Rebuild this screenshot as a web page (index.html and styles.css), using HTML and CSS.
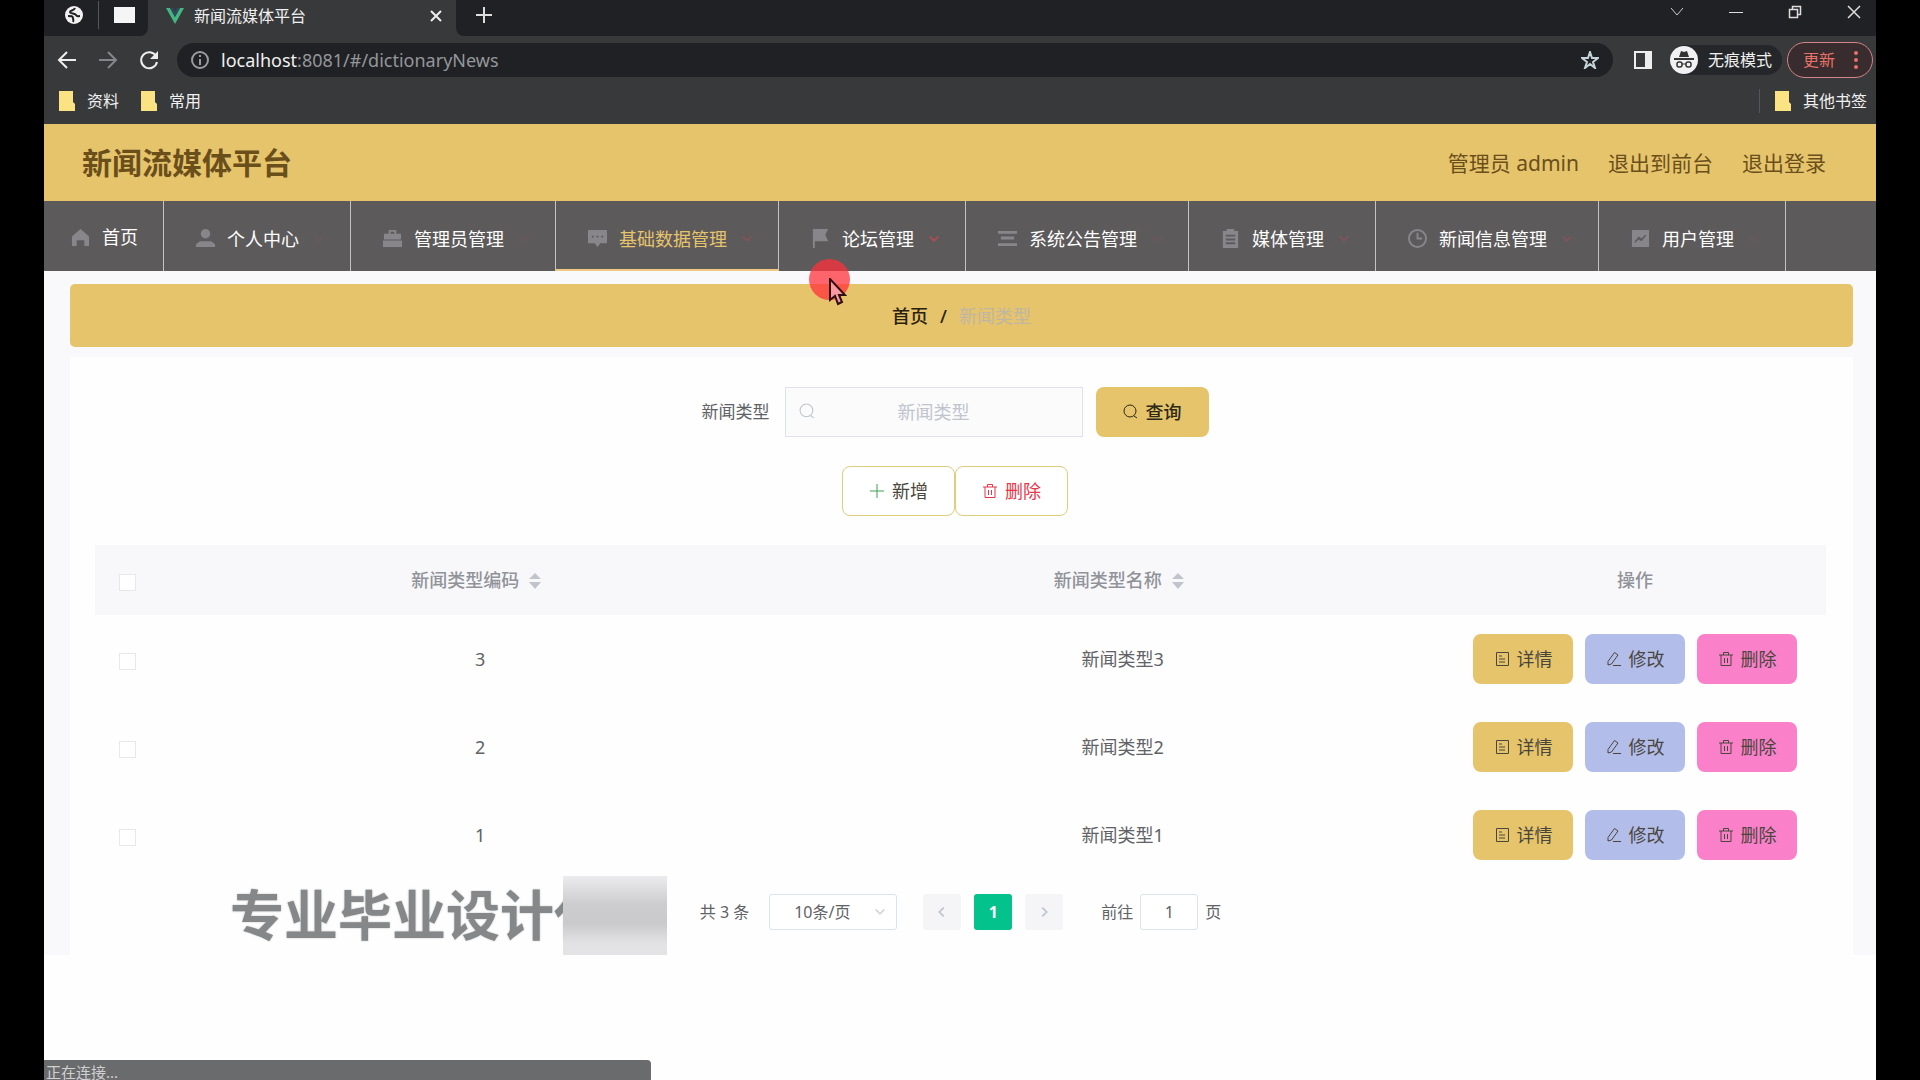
FILE: index.html
```html
<!DOCTYPE html>
<html lang="zh-CN">
<head>
    <meta charset="UTF-8">
    <meta name="viewport" content="width=device-width, initial-scale=1.0">
    <title>新闻流媒体平台</title>
    <link rel="stylesheet" href="styles.css">
</head>
<body>
    <svg class="sprite" aria-hidden="true">
        <symbol id="i-search" viewBox="0 0 16 16"><circle cx="7" cy="7" r="6" fill="none" stroke="currentColor"/><path d="M11 12l3 2" fill="none" stroke="currentColor"/></symbol>
        <symbol id="i-delete" viewBox="0 0 16 16"><path d="M1 4h14M5.500 4V1.500h5V4M3 4v10.500h10V4M6.500 7v5M9.500 7v5" fill="none" stroke="currentColor"/></symbol>
        <symbol id="i-detail" viewBox="0 0 16 16"><path d="M2.500 1.500h12v13h-12zM5 5h3M5 8h6M5 11h6" fill="none" stroke="currentColor"/></symbol>
        <symbol id="i-edit" viewBox="0 0 16 16"><path d="M2 10.500L8.500 1.500l3.500 2.500-6.500 9L2 14zM7 14.500h8" fill="none" stroke="currentColor"/></symbol>
        <symbol id="i-down" viewBox="0 0 16 16"><path d="M3 5l5 5 5-5" fill="none" stroke="currentColor" stroke-width="2"/></symbol>
        <symbol id="i-folder" viewBox="0 0 16 20"><path d="M0 0h14v11l2 2v7H0z" fill="#fbe283"/></symbol>
    </svg>

    <div class="window">
        <!-- 浏览器 -->
        <div class="browser">
            <div class="tab-strip">
                <div class="pinned">
                    <svg width="18" height="18" viewBox="0 0 18 18"><circle cx="9" cy="9" r="9" fill="#f1f1f1"/><path d="M10 2c-1 3-5 2-5 4s5 1 6 3 2 1 4 1M3 10c3 0 5 0 5 2s1 2 0 4" fill="none" stroke="#202124" stroke-width="2"/></svg>
                    <span class="split"></span>
                    <span class="blank-tab"></span>
                </div>
                <div class="tab">
                    <svg width="18" height="16" viewBox="0 0 18 16"><path d="M0 0h4l5 9 5-9h4L9 16z" fill="#41b883"/><path d="M4 0h3l2 4 2-4h3L9 9z" fill="#35495e"/></svg>
                    <span class="tab-title">新闻流媒体平台</span>
                    <button class="plain" aria-label="关闭标签页"><svg width="12" height="12" viewBox="0 0 12 12"><path d="M1 1l10 10M11 1L1 11" stroke="#eee" stroke-width="2"/></svg></button>
                </div>
                <div class="strip-rest">
                    <button class="plain" aria-label="新标签页"><svg width="16" height="16" viewBox="0 0 16 16"><path d="M8 0v16M0 8h16" stroke="#ddd" stroke-width="2"/></svg></button>
                    <div class="win-buttons">
                        <button class="plain" aria-label="搜索标签页"><svg width="14" height="14" viewBox="0 0 14 14"><path d="M1 3l6 7 6-7" fill="none" stroke="#ccc"/></svg></button>
                        <button class="plain" aria-label="最小化"><svg width="14" height="14" viewBox="0 0 14 14"><path d="M0 7.500h14" stroke="#ddd"/></svg></button>
                        <button class="plain" aria-label="还原"><svg width="14" height="14" viewBox="0 0 14 14"><path d="M1.500 4.500h8v8h-8zM4.500 4V1.500h8v8H10" fill="none" stroke="#ddd" stroke-width="1.500"/></svg></button>
                        <button class="plain" aria-label="关闭"><svg width="14" height="14" viewBox="0 0 14 14"><path d="M1 1l12 12M13 1L1 13" stroke="#ddd" stroke-width="1.500"/></svg></button>
                    </div>
                </div>
            </div>

            <div class="toolbar">
                <button class="plain" aria-label="后退"><svg width="20" height="20" viewBox="0 0 20 20"><path d="M19 10H2M10 2l-8 8 8 8" fill="none" stroke="#eee" stroke-width="2"/></svg></button>
                <button class="plain" aria-label="前进"><svg width="20" height="20" viewBox="0 0 20 20"><path d="M1 10h17M10 2l8 8-8 8" fill="none" stroke="#85868a" stroke-width="2"/></svg></button>
                <button class="plain" aria-label="重新加载"><svg width="20" height="20" viewBox="0 0 20 20"><path d="M17 6a8 8 0 1 0 1 6" fill="none" stroke="#eee" stroke-width="2"/><path d="M19 1v8h-8z" fill="#eee"/></svg></button>
                <div class="omnibox">
                    <svg width="18" height="18" viewBox="0 0 18 18"><circle cx="9" cy="9" r="8" fill="none" stroke="#9a9b9e" stroke-width="2"/><path d="M9 4v2M9 8v6" stroke="#9a9b9e" stroke-width="2"/></svg>
                    <span class="url"><b>localhost</b>:8081/#/dictionaryNews</span>
                    <svg width="18" height="18" viewBox="0 0 18 18"><path d="M9 1l2 6h6l-5 4 2 6-5-4-5 4 2-6-5-4h6z" fill="none" stroke="#c5d4da" stroke-width="2"/></svg>
                </div>
                <svg width="18" height="18" viewBox="0 0 18 18"><path d="M1 1h16v16H1z" fill="none" stroke="#eee" stroke-width="2"/><path d="M11 1h6v16h-6z" fill="#eee"/></svg>
                <div class="incognito">
                    <svg width="28" height="28" viewBox="0 0 28 28"><circle cx="14" cy="14" r="14" fill="#f1f1f4"/><path d="M9 11l2-6 3 1 3-1 2 6z" fill="#333"/><path d="M4 13h20" stroke="#333" stroke-width="2"/><rect x="7" y="16" width="5" height="5" rx="2" fill="none" stroke="#333" stroke-width="1.500"/><rect x="16" y="16" width="5" height="5" rx="2" fill="none" stroke="#333" stroke-width="1.500"/><path d="M12 18h4" stroke="#333"/></svg>
                    <span>无痕模式</span>
                </div>
                <button class="update">更新<svg width="4" height="18" viewBox="0 0 4 18"><circle cx="2" cy="2" r="2"/><circle cx="2" cy="9" r="2"/><circle cx="2" cy="16" r="2"/></svg></button>
            </div>

            <div class="bookmarks">
                <a href="#"><svg width="16" height="20"><use href="#i-folder"/></svg>资料</a>
                <a href="#"><svg width="16" height="20"><use href="#i-folder"/></svg>常用</a>
                <a class="other" href="#"><svg width="16" height="20"><use href="#i-folder"/></svg>其他书签</a>
            </div>
        </div>

        <!-- 页头 -->
        <header class="header">
            <h1>新闻流媒体平台</h1>
            <div class="user-links">
                <span>管理员 admin</span>
                <a href="#">退出到前台</a>
                <a href="#">退出登录</a>
            </div>
        </header>

        <!-- 菜单 -->
        <nav class="menu">
            <a class="menu-item home" href="#"><svg class="menu-icon" viewBox="0 0 20 20"><path d="M10 1L1 9v10h5v-6h8v6h5V9z"/></svg><span>首页</span></a>
            <a class="menu-item" href="#"><svg class="menu-icon" viewBox="0 0 20 20"><circle cx="10" cy="5" r="5"/><path d="M0 19v-3l4-3h12l4 3v3z"/></svg><span>个人中心</span><svg class="arrow dim"><use href="#i-down"/></svg></a>
            <a class="menu-item" href="#"><svg class="menu-icon" viewBox="0 0 20 20"><path d="M6 5V1h8v4h-2V3H8v2zM1 5h18v6H1zM0 12h20v7H0z"/></svg><span>管理员管理</span><svg class="arrow dim"><use href="#i-down"/></svg></a>
            <a class="menu-item active" href="#"><svg class="menu-icon" viewBox="0 0 20 20"><path d="M0 1h20v14h-7l-3 4-3-4H0zM4 7v2h2V7zm5 0v2h2V7zm5 0v2h2V7z" fill-rule="evenodd"/></svg><span>基础数据管理</span><svg class="arrow"><use href="#i-down"/></svg></a>
            <a class="menu-item" href="#"><svg class="menu-icon" viewBox="0 0 20 20"><path d="M2 0h16l-3 6 3 7H4v7H2z"/></svg><span>论坛管理</span><svg class="arrow bright"><use href="#i-down"/></svg></a>
            <a class="menu-item" href="#"><svg class="menu-icon" viewBox="0 0 20 20"><path d="M0 2h20v3H0zM3 8h14v3H3zM0 15h20v3H0z"/></svg><span>系统公告管理</span><svg class="arrow dim"><use href="#i-down"/></svg></a>
            <a class="menu-item" href="#"><svg class="menu-icon" viewBox="0 0 20 20"><path d="M2 2h4V0h8v2h4v18H2zM5 6v2h10V6zm0 4v2h10v-2zm0 4v2h10v-2z" fill-rule="evenodd"/></svg><span>媒体管理</span><svg class="arrow"><use href="#i-down"/></svg></a>
            <a class="menu-item" href="#"><svg class="menu-icon" viewBox="0 0 20 20"><path d="M10 1a9 9 0 1 0 0 18 9 9 0 0 0 0-18zM10 4v6h5" fill="none" stroke="currentColor" stroke-width="2"/></svg><span>新闻信息管理</span><svg class="arrow"><use href="#i-down"/></svg></a>
            <a class="menu-item" href="#"><svg class="menu-icon" viewBox="0 0 20 20"><path d="M1 1h18v18H1zM4 15l4-4 3 2 5-6-1-1-4 4-3-2-4 5z" fill-rule="evenodd"/></svg><span>用户管理</span><svg class="arrow dim"><use href="#i-down"/></svg></a>
        </nav>

        <!-- 主体 -->
        <main class="main">
            <div class="breadcrumb"><a href="#">首页</a><span>/</span><span class="current">新闻类型</span></div>

            <section class="card">
                <div class="search-row">
                    <label for="newsType">新闻类型</label>
                    <div class="search-box">
                        <svg><use href="#i-search"/></svg>
                        <input type="text" id="newsType" placeholder="新闻类型">
                    </div>
                    <button class="btn btn-gold strong"><svg><use href="#i-search"/></svg>查询</button>
                </div>
                <div class="tool-row">
                    <button class="btn btn-line"><svg class="green" viewBox="0 0 16 16"><path d="M8 1v14M1 8h14" stroke="currentColor"/></svg>新增</button>
                    <button class="btn btn-line red"><svg><use href="#i-delete"/></svg>删除</button>
                </div>

                <table class="table">
                    <thead>
                        <tr>
                            <th class="col-check"><input type="checkbox" aria-label="全选"></th>
                            <th class="sortable">新闻类型编码<svg class="sort" viewBox="0 0 12 16"><path d="M6 0l6 6H0zM0 9h12l-6 7z"/></svg></th>
                            <th class="sortable">新闻类型名称<svg class="sort" viewBox="0 0 12 16"><path d="M6 0l6 6H0zM0 9h12l-6 7z"/></svg></th>
                            <th class="col-action">操作</th>
                        </tr>
                    </thead>
                    <tbody>
                        <tr>
                            <td><input type="checkbox" aria-label="选择3"></td>
                            <td>3</td>
                            <td>新闻类型3</td>
                            <td>
                                <div class="actions">
                                    <button class="btn btn-gold"><svg><use href="#i-detail"/></svg>详情</button>
                                    <button class="btn btn-blue"><svg><use href="#i-edit"/></svg>修改</button>
                                    <button class="btn btn-pink"><svg><use href="#i-delete"/></svg>删除</button>
                                </div>
                            </td>
                        </tr>
                        <tr>
                            <td><input type="checkbox" aria-label="选择2"></td>
                            <td>2</td>
                            <td>新闻类型2</td>
                            <td>
                                <div class="actions">
                                    <button class="btn btn-gold"><svg><use href="#i-detail"/></svg>详情</button>
                                    <button class="btn btn-blue"><svg><use href="#i-edit"/></svg>修改</button>
                                    <button class="btn btn-pink"><svg><use href="#i-delete"/></svg>删除</button>
                                </div>
                            </td>
                        </tr>
                        <tr>
                            <td><input type="checkbox" aria-label="选择1"></td>
                            <td>1</td>
                            <td>新闻类型1</td>
                            <td>
                                <div class="actions">
                                    <button class="btn btn-gold"><svg><use href="#i-detail"/></svg>详情</button>
                                    <button class="btn btn-blue"><svg><use href="#i-edit"/></svg>修改</button>
                                    <button class="btn btn-pink"><svg><use href="#i-delete"/></svg>删除</button>
                                </div>
                            </td>
                        </tr>
                    </tbody>
                </table>

                <div class="pagination">
                    <span>共 3 条</span>
                    <div class="page-size">
                        <select aria-label="每页条数"><option>10条/页</option></select>
                        <svg><use href="#i-down"/></svg>
                    </div>
                    <div class="pager">
                        <button aria-label="上一页"><svg viewBox="0 0 16 16"><path d="M10 3L5 8l5 5" fill="none" stroke="currentColor" stroke-width="2"/></svg></button>
                        <button class="on">1</button>
                        <button aria-label="下一页"><svg viewBox="0 0 16 16"><path d="M6 3l5 5-5 5" fill="none" stroke="currentColor" stroke-width="2"/></svg></button>
                    </div>
                    <div class="jump">
                        <label for="jumpPage">前往</label>
                        <input type="text" id="jumpPage" value="1">
                        <span>页</span>
                    </div>
                </div>
            </section>
        </main>

        <div class="watermark">专业毕业设计代<span class="mosaic"></span></div>
        <div class="pointer">
            <svg width="18" height="28" viewBox="0 0 18 28"><path d="M1 1v21l5-4 3 8 4-2-3-7h6z" fill="#f99aa0" stroke="#301014" stroke-width="2"/></svg>
        </div>
        <div class="status">正在连接...</div>
    </div>
</body>
</html>
```

FILE: styles.css
```css
:root {
    --gold: #e6c46c;
    --menu-bg: #5d5a5c;
    --text-color: #606266;
    --border-color: #dfe2ea;
    --chrome-dark: #202124;
    --chrome: #38393b;
}

* {
    margin: 0;
    padding: 0;
    box-sizing: border-box;
}

body {
    font-family: "Noto Sans", "Noto Sans CJK SC", sans-serif;
    font-size: 18px;
    line-height: 24px;
    color: var(--text-color);
    background: #000;
}

button, input, select {
    font: inherit;
    color: inherit;
}

a {
    color: inherit;
    text-decoration: none;
}

svg {
    flex: none;
}

.sprite {
    position: absolute;
    width: 0;
    height: 0;
}

.window {
    position: relative;
    height: 100vh;
    margin: 0 44px;
    background: #fefefe;
    overflow: hidden;
}

/* --- 浏览器 --- */
.browser {
    background: var(--chrome);
    color: #f0f0f0;
    font-size: 16px;
}

.plain {
    display: flex;
    background: none;
    border: none;
}

.tab-strip {
    display: flex;
    height: 36px;
}

.pinned {
    display: flex;
    align-items: center;
    gap: 15px;
    width: 104px;
    padding: 0 0 6px 21px;
    background: var(--chrome-dark);
    border-bottom-right-radius: 8px;
}

.split {
    width: 1px;
    height: 28px;
    background: #55565a;
}

.blank-tab {
    width: 21px;
    height: 16px;
    background: #f5f5f5;
}

.tab {
    display: flex;
    align-items: center;
    gap: 10px;
    width: 308px;
    padding: 0 14px 4px 18px;
}

.tab-title {
    flex: 1;
}

.strip-rest {
    flex: 1;
    display: flex;
    justify-content: space-between;
    align-items: center;
    padding: 0 15px 6px 20px;
    background: var(--chrome-dark);
    border-bottom-left-radius: 8px;
}

.win-buttons {
    display: flex;
    gap: 45px;
    padding-bottom: 6px;
}

.toolbar {
    display: flex;
    align-items: center;
    gap: 21px;
    height: 48px;
    padding: 0 3px 0 13px;
}

.omnibox {
    flex: 1;
    display: flex;
    align-items: center;
    gap: 12px;
    height: 34px;
    padding: 0 14px;
    margin-left: -3px;
    border-radius: 17px;
    background: #202124;
}

.url {
    flex: 1;
    font-size: 18px;
    color: #94969a;
}

.url b {
    font-weight: 400;
    color: #f0f0f0;
}

.incognito {
    display: flex;
    align-items: center;
    gap: 10px;
    height: 30px;
    margin-left: -3px;
    padding-right: 10px;
    border-radius: 15px;
    background: #252629;
}

.update {
    display: flex;
    align-items: center;
    justify-content: space-between;
    width: 86px;
    height: 36px;
    margin-left: -16px;
    padding: 0 14px 0 15px;
    color: #e87268;
    fill: #e87268;
    background: #392c2e;
    border: 1px solid #d5848a;
    border-radius: 18px;
}

.bookmarks {
    display: flex;
    align-items: center;
    gap: 22px;
    height: 40px;
    padding: 0 9px 6px 15px;
}

.bookmarks a {
    display: flex;
    align-items: center;
    gap: 12px;
}

.bookmarks .other {
    margin-left: auto;
    padding-left: 15px;
    border-left: 1px solid #55565a;
}

/* --- 页头 --- */
.header {
    display: flex;
    justify-content: space-between;
    align-items: center;
    height: 77px;
    padding: 0 50px 0 38px;
    background: var(--gold);
    color: #6b4f1b;
}

.header h1 {
    font-size: 30px;
    font-weight: 700;
    line-height: 36px;
}

.user-links {
    display: flex;
    gap: 29px;
    font-size: 21px;
}

/* --- 菜单 --- */
.menu {
    display: flex;
    height: 70px;
    background: var(--menu-bg);
    color: #fff;
}

.menu-item {
    display: flex;
    align-items: center;
    padding: 5px 24px 0 32px;
    border-right: 1px solid #c4c3c4;
}

.menu-item.home {
    padding: 2px 25px 0 27px;
}

.menu-item.active {
    padding-top: 7px;
    color: var(--gold);
    border-bottom: 2px solid #f0c985;
}

.menu-icon {
    width: 19px;
    height: 19px;
    margin-right: 12px;
    color: #88868a;
    fill: #88868a;
}

.arrow {
    width: 14px;
    height: 14px;
    margin-left: 13px;
    color: #80545b;
}

.arrow.dim {
    color: #69585d;
}

.arrow.bright {
    color: #b04a55;
}

/* --- 主体 --- */
.main {
    padding: 13px 23px 0 26px;
    background: #f9f9fc;
}

.breadcrumb {
    display: flex;
    justify-content: center;
    align-items: center;
    gap: 12px;
    height: 63px;
    border-radius: 5px;
    background: var(--gold);
    color: #2a2110;
    font-weight: 500;
}

.breadcrumb .current {
    color: #bfb6a4;
    font-weight: 400;
}

.card {
    margin-top: 10px;
    padding: 30px 27px 25px 25px;
    background: #fefefe;
}

.search-row,
.tool-row {
    display: flex;
    justify-content: center;
    align-items: center;
    height: 50px;
    margin-bottom: 29px;
    padding-right: 11px;
}

.search-row label {
    margin-right: 15px;
    font-size: 17px;
}

.search-box {
    position: relative;
    width: 298px;
    margin-right: 13px;
    color: #c0c4cc;
}

.search-box svg {
    position: absolute;
    left: 14px;
    top: 16px;
    width: 17px;
    height: 17px;
}

.search-box input {
    width: 100%;
    height: 50px;
    padding: 0 40px;
    text-align: center;
    color: var(--text-color);
    border: 1px solid var(--border-color);
    background: #fbfbfc;
}

.search-box input::placeholder {
    color: #c0c4cc;
}

/* --- 按钮 --- */
.btn {
    display: flex;
    justify-content: center;
    align-items: center;
    gap: 7px;
    width: 100px;
    height: 50px;
    border: 1px solid transparent;
    border-radius: 8px;
    color: #4a463c;
    cursor: pointer;
}

.btn svg {
    width: 16px;
    height: 16px;
}

.btn-gold {
    background: var(--gold);
}

.btn-blue {
    background: #b3bdea;
}

.btn-pink {
    background: #fb80ca;
}

.search-row .btn,
.tool-row .btn {
    width: 113px;
}

.btn.strong {
    color: #2e2816;
    font-weight: 500;
}

.btn-line {
    background: #fff;
    border-color: #dfcc7c;
}

.btn.red {
    color: #e8354c;
}

.green {
    color: #3fa050;
}

/* --- 表格 --- */
.table {
    width: 100%;
    table-layout: fixed;
    border-collapse: collapse;
    text-align: center;
}

.table th {
    height: 70px;
    background: #f8f8fa;
    color: #909399;
    font-weight: 500;
}

.table .sortable {
    padding-right: 8px;
}

.table td {
    height: 88px;
}

.col-check {
    width: 64px;
}

.col-action {
    width: 382px;
}

.sort {
    width: 12px;
    height: 16px;
    margin-left: 10px;
    vertical-align: -2px;
    fill: #c0c4cc;
}

.table input {
    appearance: none;
    width: 17px;
    height: 17px;
    border: 1px solid #e6e8ee;
    background: #fff;
    vertical-align: middle;
}

.actions {
    display: flex;
    justify-content: center;
    gap: 12px;
}

/* --- 分页 --- */
.pagination {
    display: flex;
    justify-content: center;
    align-items: center;
    height: 36px;
    margin-top: 15px;
    font-size: 16px;
}

.page-size {
    position: relative;
    margin: 0 26px 0 20px;
}

.page-size select {
    appearance: none;
    width: 128px;
    height: 36px;
    padding-left: 24px;
    border: 1px solid var(--border-color);
    border-radius: 3px;
    background: #fff;
}

.page-size svg {
    position: absolute;
    right: 10px;
    top: 11px;
    width: 14px;
    height: 14px;
    color: #d4d6dc;
}

.pager {
    display: flex;
    gap: 13px;
}

.pager button {
    display: flex;
    justify-content: center;
    align-items: center;
    width: 38px;
    height: 36px;
    border: none;
    border-radius: 3px;
    background: #f5f5f8;
    color: #c0c4cc;
}

.pager svg {
    width: 14px;
    height: 14px;
}

.pager .on {
    background: #03c28c;
    color: #fff;
    font-weight: 700;
}

.jump {
    display: flex;
    align-items: center;
    gap: 7px;
    margin-left: 38px;
}

.jump input {
    width: 58px;
    height: 36px;
    text-align: center;
    border: 1px solid var(--border-color);
    border-radius: 3px;
    background: #fff;
}

/* --- 浮层 --- */
.watermark {
    position: absolute;
    left: 186px;
    top: 876px;
    font-size: 54px;
    font-weight: 700;
    line-height: 79px;
    color: #868788;
    text-shadow: 0 0 2px #bbb;
}

.mosaic {
    position: absolute;
    left: 333px;
    top: 0;
    width: 104px;
    height: 79px;
    background: linear-gradient(#ececee, #cdcdcf 35%, #cacacc 60%, #e2e2e4 85%, #e4e4e6);
}

.pointer {
    position: absolute;
    left: 765px;
    top: 259px;
    width: 41px;
    height: 41px;
    border-radius: 50%;
    background: rgba(255, 50, 60, 0.75);
}

.pointer svg {
    position: absolute;
    left: 20px;
    top: 19px;
}

.status {
    position: absolute;
    left: 0;
    bottom: 0;
    width: 607px;
    height: 20px;
    padding: 0 2px;
    overflow: hidden;
    font-size: 15px;
    color: #d0d0d2;
    background: #6a6b6d;
    border-top-right-radius: 4px;
}
```
